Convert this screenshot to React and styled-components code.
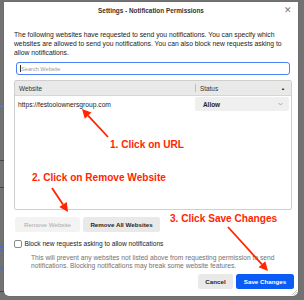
import React from "react";
import styled, { createGlobalStyle } from "styled-components";

const Global = createGlobalStyle`
  html, body { margin: 0; padding: 0; }
  body {
    background: #727272;
    width: 304px;
    height: 300px;
    overflow: hidden;
    font-family: "Liberation Sans", Arial, sans-serif;
    color: #1d1d1d;
  }
`;

const Page = styled.div`
  position: relative;
  width: 304px;
  height: 300px;
  padding: 2px 6px 0 4px;
  box-sizing: border-box;
`;

const Dialog = styled.div`
  background: #fff;
  height: 294px;
  border-radius: 0 0 5px 5px;
  display: flex;
  flex-direction: column;
  box-shadow: 0 0 1px rgba(0,0,0,0.4);
  position: relative;
`;

const TitleBar = styled.div`
  height: 17px;
  display: flex;
  align-items: center;
  justify-content: center;
  position: relative;
  font-size: 6.4px;
  font-weight: bold;
  color: #333;
`;

const Close = styled.span`
  position: absolute;
  right: 6px;
  top: 3px;
  font-size: 9px;
  color: #777;
  font-weight: normal;
`;

const Body = styled.div`
  padding: 0 6px 0 10px;
  display: flex;
  flex-direction: column;
  flex: 1;
`;

const Desc = styled.p`
  margin: 11px 0 0 0;
  font-size: 6.75px;
  line-height: 9px;
  color: #1a1a1a;
`;

const Search = styled.div`
  margin: 5px 2px 0 2px;
  height: 13px;
  border: 1.3px solid #4d7ff5;
  border-radius: 3px;
  box-sizing: border-box;
  display: flex;
  align-items: center;
  padding-left: 3px;
  font-size: 5.6px;
  color: #9a9a9a;
  &::before {
    content: "";
    width: 0.6px;
    height: 7px;
    background: #333;
    margin-right: 0.5px;
  }
`;

const Table = styled.div`
  margin-top: 5px;
  height: 130px;
  border: 1px solid #cfcfcf;
  border-radius: 2px;
  box-sizing: border-box;
  display: flex;
  flex-direction: column;
`;

const HeaderRow = styled.div`
  height: 14px;
  background: #e9e9e9;
  border-bottom: 1px solid #d6d6d6;
  display: grid;
  grid-template-columns: 180px 1fr;
  align-items: center;
  font-size: 6.4px;
  color: #333;
`;

const HeaderCell = styled.div`
  display: flex;
  align-items: center;
  padding-left: ${p => p.$pad}px;
  padding-right: 6px;
  border-left: ${p => (p.$divider ? "1px solid #bdbdbd" : "none")};
  margin: ${p => (p.$divider ? "3px 0" : "0")};
  height: ${p => (p.$divider ? "8px" : "100%")};
  justify-content: space-between;
`;

const SortArrow = styled.span`
  font-size: 4px;
  color: #222;
`;

const DataRow = styled.div`
  height: 16px;
  display: grid;
  grid-template-columns: 180px 1fr;
  align-items: center;
  font-size: 6.7px;
`;

const Url = styled.span`
  padding-left: 3px;
  color: #222;
`;

const Select = styled.div`
  height: 14px;
  margin-right: 2px;
  background: #efefef;
  border-radius: 2px;
  display: flex;
  align-items: center;
  justify-content: space-between;
  padding: 0 6px 0 8px;
  font-weight: bold;
  font-size: 6.4px;
  color: #222;
`;

const Chevron = styled.svg`
  width: 5px;
  height: 4px;
`;

const ButtonRow = styled.div`
  display: flex;
  gap: 3px;
  margin-top: 7px;
  padding-left: 1px;
`;

const Button = styled.div`
  height: 15px;
  border-radius: 2.5px;
  display: flex;
  align-items: center;
  justify-content: center;
  font-size: 6.2px;
  box-sizing: border-box;
  background: ${p =>
    p.$variant === "disabled" ? "#f3f3f3" : p.$variant === "primary" ? "#0a5cf5" : "#e9e9e9"};
  color: ${p =>
    p.$variant === "disabled" ? "#a9a9a9" : p.$variant === "primary" ? "#fff" : "#1f1f1f"};
  font-weight: ${p => (p.$variant === "disabled" ? "normal" : "bold")};
  width: ${p => p.$w}px;
  white-space: nowrap;
`;

const CheckRow = styled.label`
  display: flex;
  align-items: center;
  gap: 3px;
  margin-top: 8px;
  font-size: 6.6px;
  color: #222;
`;

const Box = styled.span`
  width: 7.5px;
  height: 7.5px;
  border: 1px solid #8b8b8b;
  border-radius: 2px;
  box-sizing: border-box;
  background: #fff;
`;

const SubDesc = styled.p`
  margin: 6px 0 0 17px;
  font-size: 6.7px;
  line-height: 8px;
  color: #727272;
`;

const Footer = styled.div`
  display: flex;
  justify-content: flex-end;
  gap: 3px;
  margin: 4px -2px 0 0;
`;

const Grip = styled.svg`
  position: absolute;
  right: 1px;
  bottom: 1px;
  width: 5px;
  height: 5px;
`;

const Overlay = styled.div`
  position: absolute;
  inset: 0;
  pointer-events: none;
`;

const Note = styled.span`
  position: absolute;
  left: ${p => p.$x}px;
  top: ${p => p.$y}px;
  color: #ff2600;
  font-weight: bold;
  font-size: 10.1px;
  line-height: 12px;
  white-space: nowrap;
  font-family: "Liberation Sans", Arial, sans-serif;
`;

const Arrow = ({ x1, y1, x2, y2 }) => {
  const ang = Math.atan2(y2 - y1, x2 - x1);
  const len = 9;
  const w = 4.5;
  const bx = x2 - len * Math.cos(ang);
  const by = y2 - len * Math.sin(ang);
  const px = -Math.sin(ang) * w;
  const py = Math.cos(ang) * w;
  return (
    <g>
      <line x1={x1} y1={y1} x2={bx} y2={by} stroke="#ff2600" strokeWidth="1.8" />
      <polygon
        points={`${x2},${y2} ${bx + px},${by + py} ${bx - px},${by - py}`}
        fill="#ff2600"
      />
    </g>
  );
};

const ArrowLayer = styled.svg`
  position: absolute;
  left: 0;
  top: 0;
  width: 304px;
  height: 300px;
`;

const EdgeLink = styled.span`
  position: absolute;
  left: 0;
  top: ${p => p.$y}px;
  width: 4px;
  height: 1px;
  background: ${p => p.$c};
`;

export default function App() {
  return (
    <>
      <Global />
      <Page>
        <EdgeLink $y={106} $c="#5b7fc4" />
        <EdgeLink $y={160} $c="#444" />
        <EdgeLink $y={187} $c="#444" />
        <EdgeLink $y={246} $c="#4a6fb8" />
        <EdgeLink $y={250} $c="#4a6fb8" />
        <EdgeLink $y={268} $c="#4a6fb8" />
        <EdgeLink $y={291} $c="#444" />
        <Dialog>
          <TitleBar>
            Settings - Notification Permissions
            <Close>✕</Close>
          </TitleBar>
          <Body>
            <Desc>
              The following websites have requested to send you notifications. You can specify which
              websites are allowed to send you notifications. You can also block new requests asking to
              allow notifications.
            </Desc>
            <Search>Search Website</Search>
            <Table>
              <HeaderRow>
                <HeaderCell $pad={4}>Website</HeaderCell>
                <HeaderCell $pad={4} $divider>
                  Status
                  <SortArrow>▲</SortArrow>
                </HeaderCell>
              </HeaderRow>
              <DataRow>
                <Url>https://festoolownersgroup.com</Url>
                <Select>
                  Allow
                  <Chevron viewBox="0 0 10 6">
                    <path d="M1 1 L5 5 L9 1" fill="none" stroke="#888" strokeWidth="1.3" />
                  </Chevron>
                </Select>
              </DataRow>
            </Table>
            <ButtonRow>
              <Button $variant="disabled" $w={65}>Remove Website</Button>
              <Button $w={77}>Remove All Websites</Button>
            </ButtonRow>
            <CheckRow>
              <Box />
              Block new requests asking to allow notifications
            </CheckRow>
            <SubDesc>
              This will prevent any websites not listed above from requesting permission to send
              notifications. Blocking notifications may break some website features.
            </SubDesc>
            <Footer>
              <Button $w={35}>Cancel</Button>
              <Button $variant="primary" $w={58}>Save Changes</Button>
            </Footer>
          </Body>
          <Grip viewBox="0 0 5 5">
            <path d="M0 5 L5 0 M2 5 L5 2" stroke="#aaa" strokeWidth="0.6" />
          </Grip>
        </Dialog>
        <Overlay>
          <Note $x={110} $y={139}>1. Click on URL</Note>
          <Note $x={32} $y={172}>2. Click on Remove Website</Note>
          <Note $x={170} $y={213}>3. Click Save Changes</Note>
          <ArrowLayer viewBox="0 0 304 300">
            <Arrow x1={108} y1={137} x2={82} y2={109} />
            <Arrow x1={52} y1={188} x2={68} y2={212} />
            <Arrow x1={228} y1={227} x2={268} y2={271} />
          </ArrowLayer>
        </Overlay>
      </Page>
    </>
  );
}
